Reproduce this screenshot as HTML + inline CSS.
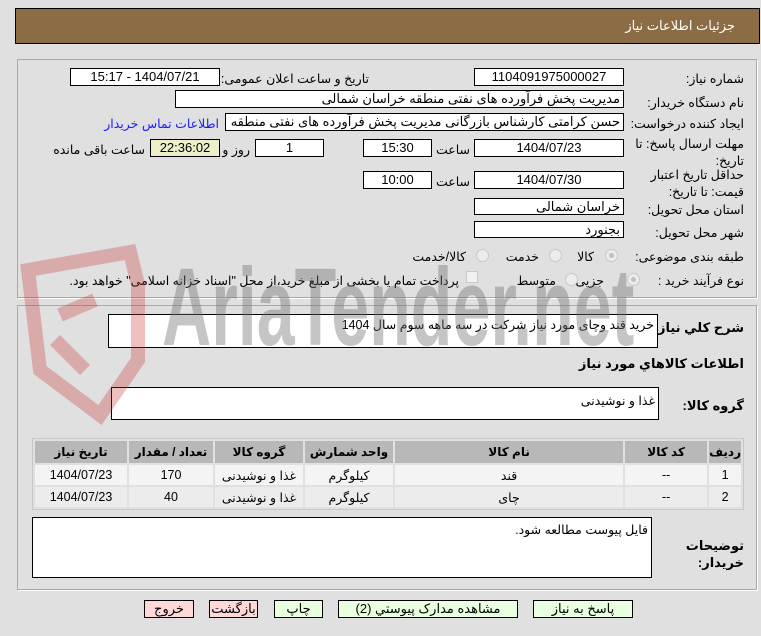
<!DOCTYPE html>
<html><head><meta charset="utf-8"><style>
*{box-sizing:border-box;margin:0;padding:0}
body{width:761px;height:636px;background:#e0e0e0;font-family:"Liberation Sans","DejaVu Sans",sans-serif;font-size:12.5px;color:#000;position:relative;overflow:hidden;direction:rtl}
.a{position:absolute;white-space:nowrap}
.box{position:absolute;background:#fff;border:1px solid #000;text-align:center;font-size:13px;line-height:16px}
.lbl{position:absolute;white-space:nowrap;text-align:right}
.panel{position:absolute;border:1px solid #a8a8a8;border-right-color:#fff;border-bottom-color:#fff;box-shadow:inset -1px -1px 0 #a8a8a8}
.radio{position:absolute;width:13px;height:13px;border-radius:50%;background:#ececec;border:1px solid #c8c8c8}
.radio.on::after{content:"";position:absolute;left:3px;top:3px;width:5px;height:5px;border-radius:50%;background:#c0c0c0}
table{position:absolute;border-collapse:separate;border-spacing:2px;background:#e0e0e0;border:1px solid #c8c8c8;direction:rtl}
th{background:#b8b8b8;font-weight:bold;font-size:12px;height:22px;text-align:center}
td{text-align:center;height:20px;font-size:12.5px}
tr.r1 td{background:#f4f4f4} tr.r2 td{background:#ececec}
.btn{position:absolute;height:18px;border:1px solid #000;text-align:center;font-size:13px;line-height:16px}
.g{background:#e8ffe0}.p{background:#ffd8d8}
.ta{position:absolute;background:#fff;border:1px solid #000;text-align:right;padding:2px 3px;font-size:12.5px}
</style></head><body>
<div class="a" style="left:15px;top:8px;width:745px;height:36px;background:#8b6c45;border:1px solid #000"></div>
<div class="a" style="right:26px;top:18px;color:#fff;font-size:13px">جزئیات اطلاعات نیاز</div>

<div class="panel" style="left:17px;top:59px;width:741px;height:240px"></div>
<div class="lbl" style="right:17px;top:71px">شماره نیاز:</div>
<div class="box" style="left:474px;top:68px;width:150px;height:18px">1104091975000027</div>
<div class="lbl" style="right:392px;top:71px">تاریخ و ساعت اعلان عمومی:</div>
<div class="box" style="left:70px;top:68px;width:150px;height:18px">1404/07/21 - 15:17</div>
<div class="lbl" style="right:17px;top:95px">نام دستگاه خریدار:</div>
<div class="box" style="left:175px;top:90px;width:449px;height:18px;text-align:right;padding-right:3px">مدیریت پخش فرآورده های نفتی منطقه خراسان شمالی</div>
<div class="lbl" style="right:17px;top:116px">ایجاد کننده درخواست:</div>
<div class="box" style="left:225px;top:113px;width:399px;height:18px;text-align:right;padding-right:3px;overflow:hidden">حسن کرامتی کارشناس بازرگانی مدیریت پخش فرآورده های نفتی منطقه خراسان</div>
<div class="lbl" style="right:542px;top:116px;color:#1a1aff">اطلاعات تماس خریدار</div>
<div class="lbl" style="right:17px;top:136px;line-height:17px">مهلت ارسال پاسخ: تا<br>تاریخ:</div>
<div class="box" style="left:474px;top:139px;width:150px;height:18px">1404/07/23</div>
<div class="lbl" style="right:291px;top:142px">ساعت</div>
<div class="box" style="left:363px;top:139px;width:69px;height:18px">15:30</div>
<div class="box" style="left:255px;top:139px;width:69px;height:18px">1</div>
<div class="lbl" style="right:511px;top:142px">روز و</div>
<div class="box" style="left:150px;top:139px;width:70px;height:18px;background:#eeeec8">22:36:02</div>
<div class="lbl" style="right:616px;top:142px">ساعت باقی مانده</div>
<div class="lbl" style="right:17px;top:167px;line-height:17px">حداقل تاریخ اعتبار<br>قیمت: تا تاریخ:</div>
<div class="box" style="left:474px;top:171px;width:150px;height:18px">1404/07/30</div>
<div class="lbl" style="right:291px;top:174px">ساعت</div>
<div class="box" style="left:363px;top:171px;width:69px;height:18px">10:00</div>
<div class="lbl" style="right:17px;top:202px">استان محل تحویل:</div>
<div class="box" style="left:474px;top:198px;width:150px;height:17px;text-align:right;padding-right:3px">خراسان شمالی</div>
<div class="lbl" style="right:17px;top:225px">شهر محل تحویل:</div>
<div class="box" style="left:474px;top:221px;width:150px;height:17px;text-align:right;padding-right:3px">بجنورد</div>
<div class="lbl" style="right:17px;top:249px">طبقه بندی موضوعی:</div>
<div class="radio on" style="left:605px;top:249px"></div><div class="lbl" style="right:167px;top:249px">کالا</div>
<div class="radio" style="left:549px;top:249px"></div><div class="lbl" style="right:222px;top:249px">خدمت</div>
<div class="radio" style="left:476px;top:249px"></div><div class="lbl" style="right:295px;top:249px">کالا/خدمت</div>
<div class="lbl" style="right:17px;top:273px">نوع فرآیند خرید :</div>
<div class="radio on" style="left:627px;top:273px"></div><div class="lbl" style="right:157px;top:273px">جزیی</div>
<div class="radio" style="left:565px;top:273px"></div><div class="lbl" style="right:205px;top:273px">متوسط</div>
<div class="a" style="left:466px;top:271px;width:12px;height:12px;background:#f2f2f2;border:1px solid #c8c8c8"></div>
<div class="lbl" style="right:302px;top:273px">پرداخت تمام یا بخشی از مبلغ خرید،از محل "اسناد خزانه اسلامی" خواهد بود.</div>

<div class="panel" style="left:17px;top:305px;width:741px;height:286px"></div>
<div class="lbl" style="right:17px;top:320px;font-weight:bold;font-size:13px">شرح کلي نياز:</div>
<div class="ta" style="left:108px;top:314px;width:550px;height:34px">خرید قند وچای مورد نیاز شرکت در سه ماهه سوم سال 1404</div>
<div class="lbl" style="right:17px;top:356px;font-weight:bold;font-size:13px">اطلاعات کالاهاي مورد نياز</div>
<div class="lbl" style="right:17px;top:398px;font-weight:bold;font-size:13px">گروه کالا:</div>
<div class="ta" style="left:111px;top:387px;width:548px;height:33px;padding-top:5px">غذا و نوشیدنی</div>
<table style="left:32px;top:438px;width:712px">
<tr><th style="width:26px">ردیف</th><th style="width:82px">کد کالا</th><th>نام کالا</th><th style="width:88px">واحد شمارش</th><th style="width:88px">گروه کالا</th><th style="width:84px">تعداد / مقدار</th><th style="width:92px">تاریخ نیاز</th></tr>
<tr class="r1"><td>1</td><td>--</td><td>قند</td><td>کیلوگرم</td><td>غذا و نوشیدنی</td><td>170</td><td>1404/07/23</td></tr>
<tr class="r2"><td>2</td><td>--</td><td>چای</td><td>کیلوگرم</td><td>غذا و نوشیدنی</td><td>40</td><td>1404/07/23</td></tr>
</table>
<div class="ta" style="left:32px;top:517px;width:620px;height:61px;padding-top:4px">فایل پیوست مطالعه شود.</div>
<div class="lbl" style="right:17px;top:537px;font-weight:bold;font-size:13px;line-height:17px">توضیحات<br>خریدار:</div>

<div class="btn p" style="left:144px;top:600px;width:50px">خروج</div>
<div class="btn p" style="left:209px;top:600px;width:49px">بازگشت</div>
<div class="btn g" style="left:274px;top:600px;width:49px">چاپ</div>
<div class="btn g" style="left:338px;top:600px;width:180px">مشاهده مدارک پیوستي (2)</div>
<div class="btn g" style="left:533px;top:600px;width:100px">پاسخ به نیاز</div>

<svg class="a" style="left:0;top:240px;pointer-events:none" width="640" height="200" viewBox="0 0 640 200">
<g opacity="0.3">
<path d="M28 30 L130 12 L138 45 L138 120 L100 175 L40 130 Z" fill="none" stroke="#c83030" stroke-width="14"/>
<path d="M60 75 L95 60 M55 100 L85 130" stroke="#c83030" stroke-width="14"/>
</g>
<text x="0" y="0" transform="translate(162 105) scale(0.62 1)" font-family="Liberation Sans,sans-serif" font-size="110" font-weight="bold" fill="#707070" opacity="0.4" direction="ltr">AriaTender.net</text>
</svg>
</body></html>
